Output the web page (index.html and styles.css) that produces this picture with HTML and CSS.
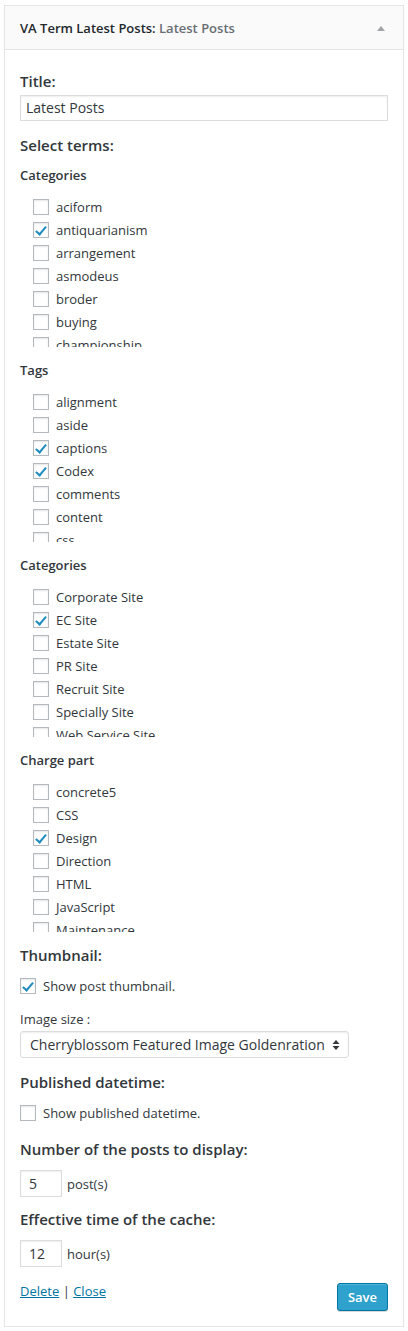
FILE: index.html
```html
<!DOCTYPE html>
<html>
<head>
<meta charset="utf-8">
<link rel="stylesheet" href="styles.css">
</head>
<body>
<div class="widget">
  <div class="widget-top">
    <div class="widget-title">VA Term Latest Posts: <span class="in-title">Latest Posts</span></div>
    <svg class="toggle" width="10" height="6" viewBox="0 0 10 6"><path d="M1 6 L5 1 L9 6 Z" fill="#a0a5aa"/></svg>
  </div>
  <div class="widget-inside">
    <p class="label first">Title:</p>
    <div class="textbox">Latest Posts</div>

    <p class="label mt-select">Select terms:</p>

    <p class="term-head">Categories</p>
    <ul class="checklist">
      <li><span class="cb"></span>aciform</li>
      <li><span class="cb on"></span>antiquarianism</li>
      <li><span class="cb"></span>arrangement</li>
      <li><span class="cb"></span>asmodeus</li>
      <li><span class="cb"></span>broder</li>
      <li><span class="cb"></span>buying</li>
      <li><span class="cb"></span>championship</li>
      <li><span class="cb"></span>chastening</li>
    </ul>

    <p class="term-head">Tags</p>
    <ul class="checklist">
      <li><span class="cb"></span>alignment</li>
      <li><span class="cb"></span>aside</li>
      <li><span class="cb on"></span>captions</li>
      <li><span class="cb on"></span>Codex</li>
      <li><span class="cb"></span>comments</li>
      <li><span class="cb"></span>content</li>
      <li><span class="cb"></span>css</li>
      <li><span class="cb"></span>dowork</li>
    </ul>

    <p class="term-head">Categories</p>
    <ul class="checklist">
      <li><span class="cb"></span>Corporate Site</li>
      <li><span class="cb on"></span>EC Site</li>
      <li><span class="cb"></span>Estate Site</li>
      <li><span class="cb"></span>PR Site</li>
      <li><span class="cb"></span>Recruit Site</li>
      <li><span class="cb"></span>Specially Site</li>
      <li><span class="cb"></span>Web Service Site</li>
    </ul>

    <p class="term-head">Charge part</p>
    <ul class="checklist">
      <li><span class="cb"></span>concrete5</li>
      <li><span class="cb"></span>CSS</li>
      <li><span class="cb on"></span>Design</li>
      <li><span class="cb"></span>Direction</li>
      <li><span class="cb"></span>HTML</li>
      <li><span class="cb"></span>JavaScript</li>
      <li><span class="cb"></span>Maintenance</li>
      <li><span class="cb"></span>PHP</li>
    </ul>

    <p class="label mt-thumb">Thumbnail:</p>
    <div class="check-row"><span class="cb on"></span>Show post thumbnail.</div>
    <p class="small-label">Image size :</p>
    <div class="select">
      <span>Cherryblossom Featured Image Goldenration</span>
      <svg class="arrows" width="8" height="12" viewBox="0 0 8 12"><path d="M4 1 L7.5 5 L0.5 5 Z M4 11 L7.5 7 L0.5 7 Z" fill="#32373c"/></svg>
    </div>

    <p class="label mt-pub">Published datetime:</p>
    <div class="check-row"><span class="cb"></span>Show published datetime.</div>

    <p class="label mt-num">Number of the posts to display:</p>
    <div class="num-row"><span class="numbox">5</span>post(s)</div>

    <p class="label mt-cache">Effective time of the cache:</p>
    <div class="num-row"><span class="numbox">12</span>hour(s)</div>

    <div class="actions">
      <div class="links"><a href="#">Delete</a> | <a href="#">Close</a></div>
      <span class="button">Save</span>
    </div>
  </div>
</div>
</body>
</html>
```
FILE: styles.css
```css
* { box-sizing: border-box; }
html, body { margin: 0; padding: 0; background: #fff; }
body {
  font-family: "Open Sans", "Noto Sans", sans-serif;
  font-size: 13px;
  color: #444;
  padding: 5px 4px 0 4px;
}
.widget {
  width: 400px;
  border: 1px solid #e5e5e5;
  background: #fff;
  box-shadow: 0 1px 1px rgba(0,0,0,.04);
}
.widget-top {
  height: 44px;
  background: #fafafa;
  border-bottom: 1px solid #e5e5e5;
  display: flex;
  align-items: center;
  justify-content: space-between;
  padding: 0 17px 0 15px;
}
.widget-title {
  font-weight: 600;
  font-size: 13px;
  color: #23282d;
}
.in-title { color: #686e74; font-weight: 600; }
.toggle { margin-top: 1px; }
.widget-inside {
  padding: 0 15px 15px 15px;
}
p { margin: 0; }
.label {
  font-size: 15px;
  font-weight: 600;
  line-height: 20px;
  color: #32373c;
}
.first { margin-top: 21px; }
.textbox {
  margin-top: 4px;
  height: 26px;
  border: 1px solid #ddd;
  box-shadow: inset 0 1px 2px rgba(0,0,0,.07);
  padding: 0 5px;
  line-height: 24px;
  font-size: 14px;
  color: #32373c;
}
.mt-select { margin-top: 14px; }
.term-head {
  font-size: 13px;
  font-weight: 600;
  line-height: 18px;
  color: #32373c;
  margin-top: 11px;
}
.checklist + .term-head { margin-top: 14px; }
.checklist {
  list-style: none;
  margin: 11px 0 0 0;
  padding: 0 0 0 13px;
  height: 152px;
  overflow: hidden;
}
.checklist li {
  height: 23px;
  display: flex;
  align-items: center;
  font-size: 13px;
  color: #32373c;
}
.cb {
  width: 16px;
  height: 16px;
  border: 1px solid #b4b9be;
  background: #fff;
  box-shadow: inset 0 1px 2px rgba(0,0,0,.1);
  margin-right: 7px;
  flex: none;
  position: relative;
}
.cb.on::after {
  content: "";
  position: absolute;
  left: 4px;
  top: 1px;
  width: 4px;
  height: 9px;
  border: solid #1e8cbe;
  border-width: 0 2.5px 2.5px 0;
  transform: rotate(40deg);
}
.mt-thumb { margin-top: 13px; }
.check-row {
  display: flex;
  align-items: center;
  height: 24px;
  margin-top: 9px;
  color: #32373c;
}
.small-label {
  margin-top: 12px;
  line-height: 18px;
  color: #32373c;
}
.select {
  margin-top: 3px;
  width: 329px;
  height: 27px;
  border: 1px solid #ddd;
  border-radius: 3px;
  box-shadow: inset 0 1px 2px rgba(0,0,0,.07);
  display: flex;
  align-items: center;
  justify-content: space-between;
  padding: 0 8px 0 9px;
  font-size: 14px;
  color: #32373c;
}
.mt-pub { margin-top: 14px; }
.mt-num { margin-top: 14px; }
.mt-cache { margin-top: 12px; }
.num-row {
  display: flex;
  align-items: center;
  margin-top: 11px;
  color: #32373c;
}
.numbox {
  width: 42px;
  height: 27px;
  border: 1px solid #ddd;
  box-shadow: inset 0 1px 2px rgba(0,0,0,.07);
  padding: 0 8px;
  line-height: 25px;
  font-size: 14px;
  margin-right: 5px;
}
.actions {
  display: flex;
  justify-content: space-between;
  align-items: flex-start;
  margin-top: 15px;
}
.links { color: #32373c; line-height: 18px; }
.links a { color: #0074a2; }
.button {
  margin-top: 1px;
  height: 28px;
  padding: 0 10px;
  background: #2ea2cc;
  border: 1px solid #0074a2;
  border-radius: 3px;
  box-shadow: inset 0 1px 0 rgba(120,200,230,.5), 0 1px 0 rgba(0,0,0,.15);
  color: #fff;
  font-weight: 600;
  font-size: 13px;
  line-height: 26px;
}
```
